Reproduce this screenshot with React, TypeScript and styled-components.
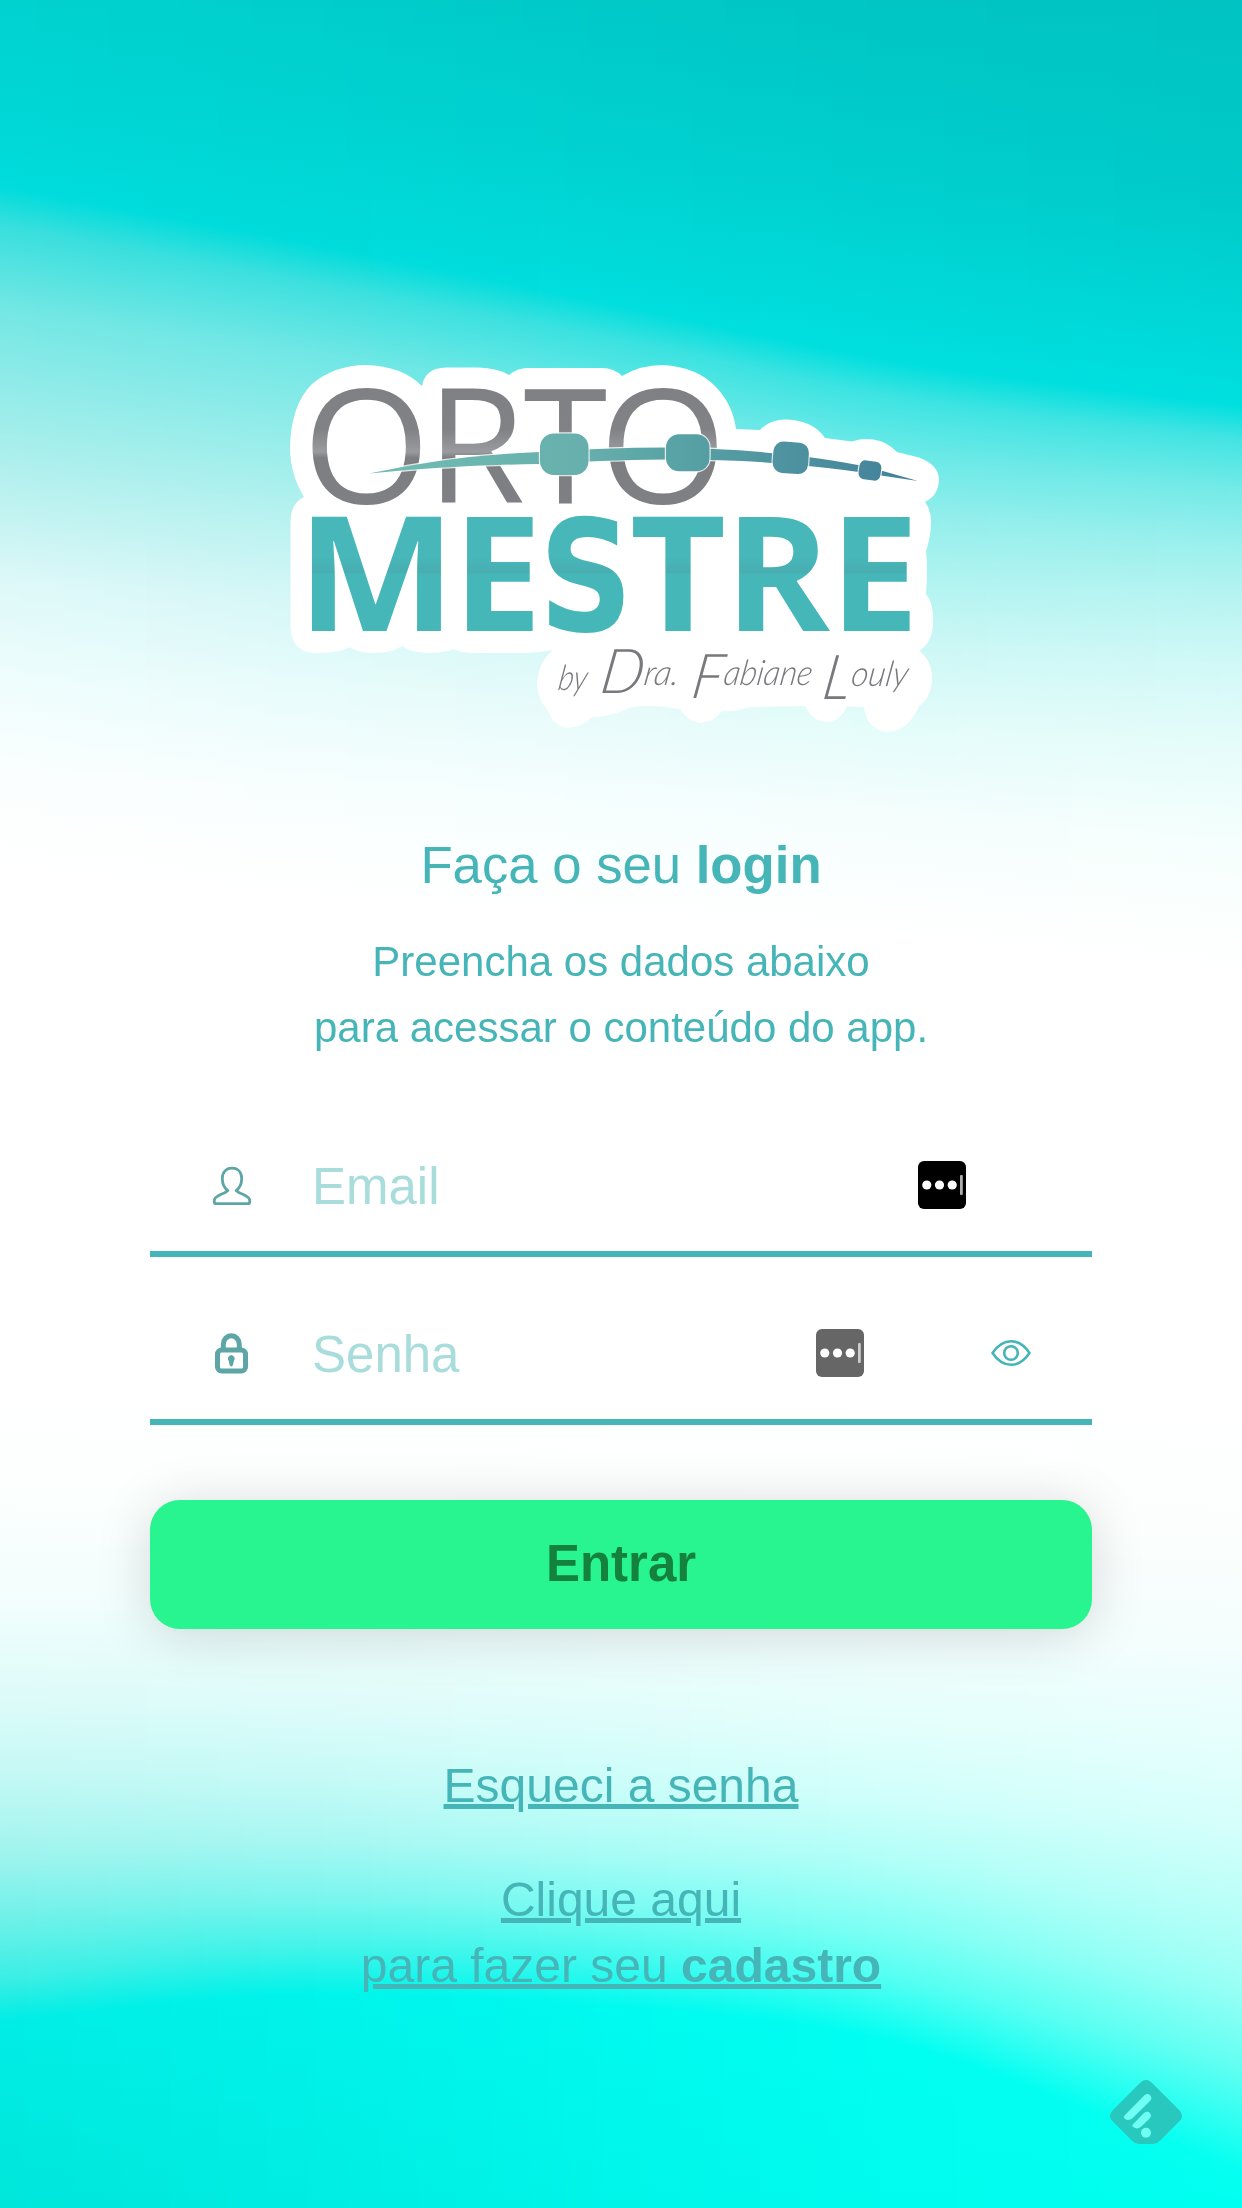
import React, { useLayoutEffect, useRef } from "react";
import styled, { createGlobalStyle } from "styled-components";

const WIDTH = 1242;
const HEIGHT = 2208;
const TEAL = "#45b5b7";

const GlobalStyle = createGlobalStyle`
  *, *::before, *::after { box-sizing: border-box; }
  body { margin: 0; background: #fff; font-family: "Liberation Sans", Arial, sans-serif; }
`;

const Page = styled.div`
  display: grid;
  grid-template-columns: ${WIDTH}px;
  grid-template-rows: ${HEIGHT}px;
  width: ${WIDTH}px;
  height: ${HEIGHT}px;
  overflow: hidden;
`;

const Backdrop = styled.canvas`
  grid-area: 1 / 1;
  display: block;
`;

const Screen = styled.main`
  grid-area: 1 / 1;
  z-index: 1;
  display: flex;
  flex-direction: column;
  align-items: stretch;
  padding: 340px 150px 0;
  color: ${TEAL};
`;

const Logo = styled.svg`
  display: block;
  flex: none;
  width: 942px;
  height: 420px;
`;

const Heading = styled.h1`
  margin: 72px 0 0;
  font-size: 52.7px;
  font-weight: 400;
  line-height: 66px;
  text-align: center;
`;

const Lead = styled.p`
  margin: 31px 0 0;
  font-size: 42px;
  line-height: 66px;
  text-align: center;
`;

const Form = styled.form`
  display: flex;
  flex-direction: column;
  gap: 30px;
  margin-top: 58px;
`;

const Field = styled.label`
  display: flex;
  align-items: center;
  height: 138px;
  padding: 0 61px 0 63px;
  border-bottom: 6px solid ${TEAL};
`;

const FieldIcon = styled.svg`
  flex: none;
  width: 38px;
  height: 40px;
  margin-right: 61px;
  overflow: visible;
`;

const Input = styled.input`
  flex: 1;
  min-width: 0;
  height: 68px;
  padding: 2px 0 0;
  border: 0;
  outline: 0;
  background: transparent;
  color: ${TEAL};
  font: 400 51px/66px "Liberation Sans", Arial, sans-serif;
  &::placeholder { color: #a9dddb; opacity: 1; }
`;

const KeyBadge = styled.svg<{ $gap: number }>`
  flex: none;
  width: 48px;
  height: 48px;
  margin-right: ${(p) => p.$gap}px;
`;

const Eye = styled.svg`
  flex: none;
  width: 40px;
  height: 28px;
`;

const Submit = styled.button`
  height: 129px;
  margin-top: 45px;
  padding: 0 0 2px;
  border: 0;
  border-radius: 30px;
  background: #28f58f;
  box-shadow: 0 6px 54px rgba(0, 0, 0, 0.15);
  color: #14813c;
  font: 700 51px/66px "Liberation Sans", Arial, sans-serif;
`;

const Links = styled.nav`
  display: flex;
  flex-direction: column;
  align-items: center;
  gap: 48px;
  margin-top: 124px;
`;

const TextLink = styled.a`
  color: ${TEAL};
  font-size: 48px;
  line-height: 66px;
  text-align: center;
  text-decoration: underline;
  text-decoration-thickness: 5px;
  text-underline-offset: 2px;
`;

const Corner = styled.svg`
  align-self: flex-end;
  flex: none;
  width: 72px;
  height: 64px;
  margin: 81px -90px 0 0;
`;

type Stop = [number, string];

/* Vertical colour profiles; the wave is blended between neighbouring columns. */
const columns: { x: number; stops: Stop[] }[] = [
  { x: 0, stops: [[0, "00d2d0"], [100, "00d6d4"], [186, "00dcdc"], [225, "38dfdd"], [310, "74e7e4"], [420, "9eedea"], [500, "bdf2f0"], [580, "ddf8f8"], [680, "effdfd"], [780, "fbfefe"], [880, "ffffff"], [1400, "ffffff"], [1500, "fbfffe"], [1600, "f2fefd"], [1700, "dcfbf9"], [1770, "c6f9f5"], [1850, "a2f4ee"], [1910, "76f1e9"], [1980, "3aeee4"], [2022, "00ede5"], [2208, "00e6db"]] },
  { x: 290, stops: [[0, "00cecc"], [120, "00d4d2"], [240, "00dcdb"], [280, "3ce0de"], [350, "70e7e5"], [440, "96edea"], [520, "b8f2f0"], [600, "d6f7f7"], [690, "e9fcfc"], [790, "f8fefe"], [900, "ffffff"], [1400, "ffffff"], [1510, "fbfffe"], [1600, "f3fefd"], [1700, "dffcfa"], [1770, "c8faf7"], [1840, "a8f7f2"], [1900, "78f5ed"], [1950, "40f3e9"], [1995, "00f3ea"], [2208, "00ece2"]] },
  { x: 620, stops: [[0, "00c9c8"], [150, "00d1d0"], [305, "00dedd"], [340, "3ae2e0"], [400, "6ae8e6"], [470, "8eedea"], [540, "b2f2f0"], [620, "d0f7f5"], [710, "e6fbfa"], [800, "f5fefe"], [920, "ffffff"], [1400, "ffffff"], [1530, "fbfefe"], [1630, "f1fefd"], [1720, "defdfb"], [1790, "c9fdf9"], [1850, "aafcf6"], [1910, "78fbf2"], [1960, "40f9ee"], [2008, "00faef"], [2208, "00f5e9"]] },
  { x: 900, stops: [[0, "00c5c4"], [180, "00cfce"], [362, "00dfde"], [398, "3de4e2"], [450, "68e9e7"], [510, "90eeeb"], [570, "acf3f0"], [640, "caf7f5"], [725, "e3fcfa"], [820, "f5fefd"], [940, "ffffff"], [1400, "ffffff"], [1540, "fbfefe"], [1640, "f2fefd"], [1730, "e2fffc"], [1800, "cffffb"], [1860, "b2fff8"], [1930, "80fff4"], [1980, "54fff2"], [2045, "00fef1"], [2208, "00fcee"]] },
  { x: 1242, stops: [[0, "00c3c2"], [200, "00cbca"], [406, "00dfdf"], [440, "42e4e2"], [490, "74eae7"], [550, "9df0ed"], [605, "baf4f2"], [670, "d2f9f7"], [750, "e6fcfa"], [850, "f6fffd"], [980, "ffffff"], [1400, "ffffff"], [1560, "fafefd"], [1650, "f3fefd"], [1740, "e6fffd"], [1830, "d4fffb"], [1920, "b4fff8"], [1990, "98fff5"], [2070, "60fff2"], [2170, "06fff1"], [2208, "00fff0"]] },
];

const rgb = (hex: string) => [0, 2, 4].map((i) => parseInt(hex.slice(i, i + 2), 16));
const mix = (a: number, b: number, t: number) => a + (b - a) * t;

/* Slope of stop n at column i, so that edges bend smoothly through each column. */
function slope(i: number, n: number) {
  const lo = columns[Math.max(0, i - 1)];
  const hi = columns[Math.min(columns.length - 1, i + 1)];
  return (hi.stops[n][0] - lo.stops[n][0]) / (hi.x - lo.x);
}

function stopY(i: number, n: number, t: number) {
  const a = columns[i];
  const b = columns[i + 1];
  const w = b.x - a.x;
  const t2 = t * t;
  const t3 = t2 * t;
  return (
    (2 * t3 - 3 * t2 + 1) * a.stops[n][0] +
    (t3 - 2 * t2 + t) * w * slope(i, n) +
    (3 * t2 - 2 * t3) * b.stops[n][0] +
    (t3 - t2) * w * slope(i + 1, n)
  );
}

function paintWave(ctx: CanvasRenderingContext2D) {
  for (let x = 0; x < WIDTH; x++) {
    let i = 0;
    while (i < columns.length - 2 && x > columns[i + 1].x) i++;
    const a = columns[i];
    const b = columns[i + 1];
    const t = (x - a.x) / (b.x - a.x);
    const gradient = ctx.createLinearGradient(0, 0, 0, HEIGHT);
    a.stops.forEach(([, ca], n) => {
      const from = rgb(ca);
      const to = rgb(b.stops[n][1]);
      const color = from.map((v, k) => Math.round(mix(v, to[k], t)));
      const y = Math.min(HEIGHT, Math.max(0, stopY(i, n, t)));
      gradient.addColorStop(y / HEIGHT, `rgb(${color.join(",")})`);
    });
    ctx.fillStyle = gradient;
    ctx.fillRect(x, 0, 1, HEIGHT);
  }
}

function Wave() {
  const ref = useRef<HTMLCanvasElement>(null);
  useLayoutEffect(() => {
    const ctx = ref.current?.getContext("2d");
    if (ctx) paintWave(ctx);
  }, []);
  return <Backdrop ref={ref} width={WIDTH} height={HEIGHT} aria-hidden />;
}

type Letter = { char: string; x: number; width: number };

const orto: Letter[] = [
  { char: "O", x: 302.5, width: 127.7 },
  { char: "R", x: 426.6, width: 98.6 },
  { char: "T", x: 523.5, width: 83.8 },
  { char: "O", x: 599, width: 127.7 },
];
const mestre: Letter[] = [
  { char: "M", x: 296.8, width: 159.4 },
  { char: "E", x: 452.7, width: 89.3 },
  { char: "T", x: 629.7, width: 96.5 },
  { char: "R", x: 724.7, width: 105.3 },
  { char: "E", x: 829.7, width: 89.3 },
];

const Word = styled.g<{ $weight: number }>`
  font-family: "Open Sans", "Noto Sans", sans-serif;
  font-size: 159.5px;
  font-weight: ${(p) => p.$weight};
`;

const CurvedLetter = styled.text`
  font-family: "DejaVu Sans", sans-serif;
  font-size: 155px;
  font-weight: 700;
`;

const Signature = styled.g`
  font-family: Lato, "Open Sans", sans-serif;
  font-size: 35px;
  font-style: italic;
  font-weight: 300;
  fill: #77797c;
`;

const Initial = styled.tspan`
  font-size: 62px;
`;

const wire =
  "M369 473.5 Q455 455 540 452 Q605 447.5 665 447.5 Q735 448 808 457 Q860 464 881 470.5 L918 481 L881 475.5 Q850 470 808 466 Q740 459 665 459.5 Q600 460 540 464 Q455 465 369 473.5Z";

const sticker =
  "M304 497 Q290 474 290 447 Q291 405 312 384 Q335 365 366 365 Q402 366 422 386 Q425 368 446 367.5 H478 Q498 368 509 375 Q517 368 528 368 H602 Q614 368 622 376 Q640 365 663 365 Q697 367 716 387 Q733 405 736 429 L760 430 Q770 419 787 419.5 Q814 421 825 438 L852 441.5 Q866 437 880 441 Q889 444 897 452 L919 457.5 Q939 465 939 480 Q938 496 925 502 Q931 510 931 522 Q931 536 926 551 Q928 570 926 594 Q934 604 933 622 Q933 642 919 651 Q931 659 932 677 Q932 697 919 706 Q909 731 887 732 Q866 729 864 707 L847 706.5 Q840 722 826 722 Q812 721 805 706 L750 707 Q736 712 722 711 Q713 723 700 723 Q687 721 680 709 Q655 704 632 707 Q610 717 592 717 Q582 728 566 728 Q552 724 548 711 Q537 698 537 684 Q538 662 553 650 Q538 653 520 653 H475 Q460 653 454 649 Q445 653 428 653 Q412 653 402 646 Q391 653 375 653 Q358 653 350 647 Q340 653 315 653 Q291 652 290.5 627 V521 Q291 503 304 497Z";

function Letters({ items, y }: { items: Letter[]; y: number }) {
  return (
    <>
      {items.map((l) => (
        <text key={l.x} x={l.x} y={y} textLength={l.width} lengthAdjust="spacingAndGlyphs">
          {l.char}
        </text>
      ))}
    </>
  );
}

function BrandLogo() {
  return (
    <Logo viewBox="150 340 942 420" role="img" aria-label="Orto Mestre by Dra. Fabiane Louly">
      <defs>
        <linearGradient id="steel" gradientUnits="userSpaceOnUse" x1="0" y1="387" x2="0" y2="505">
          <stop offset="0" stopColor="#7e8083" />
          <stop offset=".36" stopColor="#808285" />
          <stop offset=".55" stopColor="#999b9e" />
          <stop offset=".6" stopColor="#7c7e81" />
          <stop offset="1" stopColor="#7e8083" />
        </linearGradient>
        <linearGradient id="wire" gradientUnits="userSpaceOnUse" x1="369" y1="0" x2="918" y2="0">
          <stop offset="0" stopColor="#70bdb2" />
          <stop offset=".38" stopColor="#67b0ad" />
          <stop offset=".6" stopColor="#569fa3" />
          <stop offset="1" stopColor="#42809b" />
        </linearGradient>
        <linearGradient id="sea" gradientUnits="userSpaceOnUse" x1="0" y1="517" x2="0" y2="632">
          <stop offset="0" stopColor="#47b7b9" />
          <stop offset=".35" stopColor="#47b7b9" />
          <stop offset=".48" stopColor="#48adb1" />
          <stop offset=".5" stopColor="#45b7b9" />
          <stop offset="1" stopColor="#45b7b9" />
        </linearGradient>
      </defs>
      <path d={sticker} fill="#fff" />
      <Word $weight={400} fill="url(#steel)">
        <Letters items={orto} y={503.3} />
      </Word>
      <Word $weight={700} fill="url(#sea)">
        <Letters items={mestre} y={631} />
        <CurvedLetter x="538.9" y="631" textLength="94" lengthAdjust="spacingAndGlyphs">
          S
        </CurvedLetter>
      </Word>
      <g fill="url(#wire)" stroke="#fff" strokeWidth="2.4" strokeOpacity=".8" paintOrder="stroke">
        <path d={wire} />
        <rect x="540" y="433.5" width="48.5" height="41.5" rx="14" />
        <rect x="666" y="434.3" width="43.5" height="37" rx="13" />
        <rect x="773" y="442" width="35.5" height="31.5" rx="10" transform="rotate(4 790 458)" />
        <rect x="859" y="461" width="22" height="19" rx="6" transform="rotate(8 870 470)" />
      </g>
      <Signature>
        <g transform="translate(0 690) skewX(-9)">
          <text x="557" y="0" textLength="29" lengthAdjust="spacingAndGlyphs">by</text>
          <text x="599" y="3" textLength="78" lengthAdjust="spacingAndGlyphs">
            <Initial>D</Initial>
            <tspan dy="-8">ra.</tspan>
          </text>
          <text x="691" y="8" textLength="119" lengthAdjust="spacingAndGlyphs">
            <Initial>F</Initial>
            <tspan dy="-13">abiane</tspan>
          </text>
          <text x="822" y="9" textLength="84" lengthAdjust="spacingAndGlyphs">
            <Initial>L</Initial>
            <tspan dy="-13">ouly</tspan>
          </text>
        </g>
      </Signature>
    </Logo>
  );
}

function UserIcon() {
  return (
    <FieldIcon viewBox="0 0 38 40" fill="none" stroke="#5ea5a5" strokeWidth="2.8" strokeLinejoin="round">
      <path d="M19 3.2C12.8 3.2 9.3 7.5 9.3 13.4C9.3 19 11.5 23 14.8 25.6C12 29 1.3 30.4 1.3 35.2V37Q1.3 38.7 3 38.7H35Q36.7 38.7 36.7 37V35.2C36.7 30.4 26 29 23.2 25.6C26.5 23 28.7 19 28.7 13.4C28.7 7.5 25.2 3.2 19 3.2Z" />
    </FieldIcon>
  );
}

function LockIcon() {
  return (
    <FieldIcon viewBox="0 0 38 40" fill="none" stroke="#5ea5a5" strokeWidth="5">
      <path d="M10.3 16V11.5A8 8.8 0 0 1 26.3 11.5V16" />
      <rect x="4.5" y="17" width="28" height="21" rx="4" />
      <path d="M18.3 22A3.7 3.7 0 0 0 15.7 28L16.5 31.5Q17 33.5 18.3 33.5T20.1 31.5L20.9 28A3.7 3.7 0 0 0 18.3 22Z" fill="#5ea5a5" stroke="none" />
    </FieldIcon>
  );
}

function PasswordBadge({ color, gap }: { color: string; gap: number }) {
  return (
    <KeyBadge $gap={gap} viewBox="0 0 48 48">
      <rect width="48" height="48" rx="6" fill={color} />
      <g fill="#fff">
        <circle cx="8.8" cy="24" r="4.6" />
        <circle cx="21.5" cy="24" r="4.6" />
        <circle cx="34.2" cy="24" r="4.6" />
        <rect x="42" y="14" width="2.8" height="20" rx="1" opacity=".68" />
      </g>
    </KeyBadge>
  );
}

export default function App() {
  return (
    <Page>
      <GlobalStyle />
      <Wave />
      <Screen>
        <BrandLogo />
        <Heading>
          Faça o seu <strong>login</strong>
        </Heading>
        <Lead>
          Preencha os dados abaixo
          <br />
          para acessar o conteúdo do app.
        </Lead>
        <Form onSubmit={(e) => e.preventDefault()}>
          <Field>
            <UserIcon />
            <Input type="email" placeholder="Email" />
            <PasswordBadge color="#000" gap={65} />
          </Field>
          <Field>
            <LockIcon />
            <Input type="password" placeholder="Senha" />
            <PasswordBadge color="#666" gap={127} />
            <Eye viewBox="0 0 40 28" fill="none" stroke={TEAL} strokeWidth="2.6" strokeLinejoin="round">
              <path d="M1.5 14Q9.5 2.2 20 2.2T38.5 14Q30.5 25.8 20 25.8T1.5 14Z" />
              <circle cx="20" cy="14" r="6.8" />
            </Eye>
          </Field>
          <Submit type="submit">Entrar</Submit>
        </Form>
        <Links>
          <TextLink>Esqueci a senha</TextLink>
          <TextLink>
            Clique aqui
            <br />
            para fazer seu <strong>cadastro</strong>
          </TextLink>
        </Links>
        <Corner viewBox="0 0 72 64">
          <path d="M30.5 2.4Q36 -2.4 41.5 2.4L69.6 30.5Q74.4 36 69.6 41L50 60.8Q47 64 43 64H29Q25 64 22 60.8L2.4 41Q-2.4 36 2.4 30.5Z" fill="#29c8bf" />
          <path d="M15.5 34.5L34.5 15.2Q38 12.6 40.3 15.4T40 21L22.5 38.2Q18.8 41 15.5 39.2T15.5 34.5Z" fill="#6ffff3" />
          <path d="M24 43.2L34 33Q37.5 30.3 39.8 33T39.6 38.5L31 46.8Q27.2 49.6 24 47.6T24 43.2Z" fill="#6ffff3" />
          <circle cx="36" cy="52.7" r="5" fill="#6ffff3" />
        </Corner>
      </Screen>
    </Page>
  );
}
